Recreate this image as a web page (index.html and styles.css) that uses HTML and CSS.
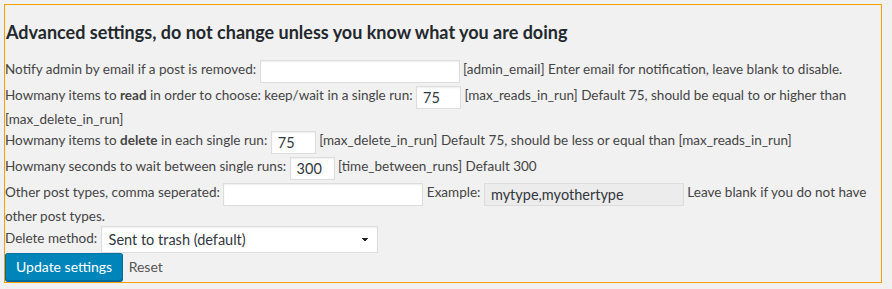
FILE: index.html
```html
<!DOCTYPE html>
<html lang="en">
  <head>
    <meta charset="UTF-8" />
    <meta name="viewport" content="width=device-width, initial-scale=1.0" />
    <title>Advanced settings</title>
    <link rel="stylesheet" href="styles.css">
  </head>
  <body>
    <form class="settings-box">
      <h3>Advanced settings, do not change unless you know what you are doing</h3>

      <div class="fields">
        Notify admin by email if a post is removed:
        <input type="text" class="wide" value="" />
        [admin_email] Enter email for notification, leave blank to disable.<br>

        Howmany items to <b>read</b> in order to choose: keep/wait in a single run:
        <input type="text" class="small" value="75" />
        [max_reads_in_run] Default 75, should be equal to or higher than [max_delete_in_run]<br>

        Howmany items to <b>delete</b> in each single run:
        <input type="text" class="small" value="75" />
        [max_delete_in_run] Default 75, should be less or equal than [max_reads_in_run]<br>

        Howmany seconds to wait between single runs:
        <input type="text" class="small" value="300" />
        [time_between_runs] Default 300<br>

        Other post types, comma seperated:
        <input type="text" class="wide" value="" />
        Example:
        <input type="text" class="wide" value="mytype,myothertype" disabled />
        Leave blank if you do not have other post types.<br>

        Delete method:
        <select class="method">
          <option>Sent to trash (default)</option>
          <option>Delete permanently</option>
        </select><br>

        <button type="button" class="button-primary">Update settings</button>
        <a href="#" class="reset">Reset</a>
      </div>
    </form>
  </body>
</html>
```

FILE: styles.css
```css
body {
  margin: 4px;
  background: #f1f1f1;
  color: #444;
  font-family: Lato, "Liberation Sans", sans-serif;
  font-size: 13.5px;
}
.settings-box {
  border: 1px solid #f5a000;
  height: 279px;
  box-sizing: border-box;
  width: 878px;
}
h3 {
  color: #23282d;
  font-size: 18px;
  font-weight: 700;
  margin: 16px 0 15px;
  padding-left: 1px;
}
.fields {
  line-height: 19px;
  padding-left: 0;
}
input,
select {
  font-family: inherit;
  font-size: 14.5px;
  color: #32373c;
  background: #fff;
  border: 1px solid #ddd;
  box-shadow: inset 0 1px 2px rgba(0, 0, 0, 0.07);
  height: 23px;
  box-sizing: border-box;
  padding: 2px 6px;
  margin: 2px 0 1px;
  vertical-align: middle;
}
input.wide {
  width: 200px;
}
input.small {
  width: 45px;
}
input[disabled] {
  background: #ececec;
  color: #32373c;
  box-shadow: none;
}
select.method {
  -webkit-appearance: none;
  appearance: none;
  width: 277px;
  height: 27px;
  margin: 0;
  padding: 2px 24px 2px 7px;
  background-color: #fff;
  background-image: linear-gradient(45deg, transparent 50%, #222 50%),
    linear-gradient(-45deg, transparent 50%, #222 50%);
  background-size: 4px 4px;
  background-position: calc(100% - 12px) 50%, calc(100% - 8px) 50%;
  background-repeat: no-repeat;
}
.button-primary {
  font-family: inherit;
  font-size: 14px;
  height: 28px;
  padding: 0 10px 1px;
  margin: 0;
  background: #0085ba;
  border: 1px solid #006799;
  border-color: #0073aa #006799 #006799;
  border-radius: 3px;
  box-shadow: 0 1px 0 #006799;
  color: #fff;
  vertical-align: top;
  cursor: pointer;
}
.reset {
  color: #555;
  font-size: 14px;
  text-decoration: none;
  margin-left: 2px;
  vertical-align: top;
  line-height: 28px;
}
```
